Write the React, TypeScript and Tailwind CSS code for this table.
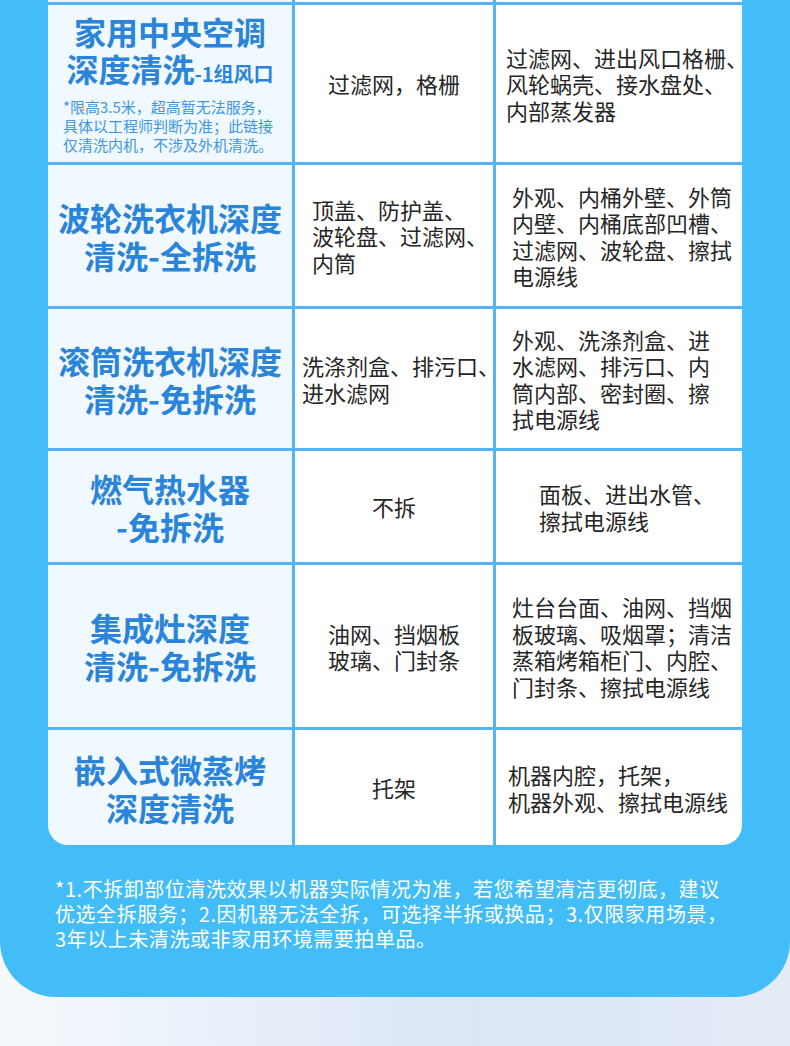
import React from "react";

const FONT = "font-['Noto_Sans_CJK_SC','Noto_Sans',sans-serif]";

function Title({ l1, l2 }: { l1: React.ReactNode; l2: React.ReactNode }) {
  return (
    <div className="text-center text-[32px] leading-[38px] font-bold text-[#2a84d9] whitespace-nowrap">
      <div>{l1}</div>
      <div>{l2}</div>
    </div>
  );
}

function Lines({ lines, className = "" }: { lines: string[]; className?: string }) {
  return (
    <div className={`text-[22px] leading-[26.5px] text-[#262626] whitespace-nowrap ${className}`}>
      {lines.map((l, i) => (
        <div key={i}>{l}</div>
      ))}
    </div>
  );
}

export default function App() {
  const c1 = "bg-[#f0f9ff] flex flex-col items-center justify-center";
  const cw = "bg-white flex items-center";
  return (
    <div className={`w-[790px] h-[1046px] overflow-hidden bg-[linear-gradient(90deg,#f5f9fd_0%,#e6eef9_35%,#dbe6f5_60%,#e4ecf7_100%)] ${FONT}`}>
      <div className="w-[790px] bg-[#42bdf8] rounded-b-[56px] px-[48px] pb-[46px]">
        <div className="grid grid-cols-[244px_198px_246px] grid-rows-[2px_157px_141px_139px_111px_162px_115px] gap-[3px] bg-[#56b4f4] rounded-b-[20px] overflow-hidden">
          {/* cut-off previous row */}
          <div className="bg-[#f0f9ff]" />
          <div className="bg-white" />
          <div className="bg-white" />

          {/* Row 1 */}
          <div className={c1}>
            <div className="text-center font-bold text-[#2a84d9] whitespace-nowrap text-[32px] leading-[37px]">
              <div>家用中央空调</div>
              <div>
                深度清洗<span className="text-[20px]">-1组风口</span>
              </div>
            </div>
            <div className="self-stretch pl-[15px] mt-[5px] text-[15px] leading-[19px] text-[#4096e2] whitespace-nowrap">
              <div>*限高3.5米，超高暂无法服务，</div>
              <div>具体以工程师判断为准；此链接</div>
              <div>仅清洗内机，不涉及外机清洗。</div>
            </div>
          </div>
          <div className={`${cw} justify-center`}>
            <Lines lines={["过滤网，格栅"]} />
          </div>
          <div className={`${cw} pl-[10px]`}>
            <Lines lines={["过滤网、进出风口格栅、", "风轮蜗壳、接水盘处、", "内部蒸发器"]} />
          </div>

          {/* Row 2 */}
          <div className={c1}>
            <Title l1="波轮洗衣机深度" l2="清洗-全拆洗" />
          </div>
          <div className={`${cw} pl-[17px]`}>
            <Lines lines={["顶盖、防护盖、", "波轮盘、过滤网、", "内筒"]} />
          </div>
          <div className={`${cw} pl-[16px]`}>
            <Lines lines={["外观、内桶外壁、外筒", "内壁、内桶底部凹槽、", "过滤网、波轮盘、擦拭", "电源线"]} />
          </div>

          {/* Row 3 */}
          <div className={c1}>
            <Title l1="滚筒洗衣机深度" l2="清洗-免拆洗" />
          </div>
          <div className={`${cw} pl-[7px] overflow-visible`}>
            <Lines lines={["洗涤剂盒、排污口、", "进水滤网"]} />
          </div>
          <div className={`${cw} pl-[16px]`}>
            <Lines lines={["外观、洗涤剂盒、进", "水滤网、排污口、内", "筒内部、密封圈、擦", "拭电源线"]} />
          </div>

          {/* Row 4 */}
          <div className={c1}>
            <Title l1="燃气热水器" l2="-免拆洗" />
          </div>
          <div className={`${cw} justify-center`}>
            <Lines lines={["不拆"]} />
          </div>
          <div className={`${cw} pl-[43px]`}>
            <Lines lines={["面板、进出水管、", "擦拭电源线"]} />
          </div>

          {/* Row 5 */}
          <div className={c1}>
            <Title l1="集成灶深度" l2="清洗-免拆洗" />
          </div>
          <div className={`${cw} justify-center`}>
            <Lines lines={["油网、挡烟板", "玻璃、门封条"]} />
          </div>
          <div className={`${cw} pl-[16px]`}>
            <Lines lines={["灶台台面、油网、挡烟", "板玻璃、吸烟罩；清洁", "蒸箱烤箱柜门、内腔、", "门封条、擦拭电源线"]} />
          </div>

          {/* Row 6 */}
          <div className={c1}>
            <Title l1="嵌入式微蒸烤" l2="深度清洗" />
          </div>
          <div className={`${cw} justify-center`}>
            <Lines lines={["托架"]} />
          </div>
          <div className={`${cw} pl-[12px]`}>
            <Lines lines={["机器内腔，托架，", "机器外观、擦拭电源线"]} />
          </div>
        </div>

        <div className="mt-[31px] pl-[7px] text-[20px] leading-[25px] tracking-[0.55px] text-white whitespace-nowrap">
          <div>*1.不拆卸部位清洗效果以机器实际情况为准，若您希望清洁更彻底，建议</div>
          <div>优选全拆服务；2.因机器无法全拆，可选择半拆或换品；3.仅限家用场景，</div>
          <div>3年以上未清洗或非家用环境需要拍单品。</div>
        </div>
      </div>
    </div>
  );
}
